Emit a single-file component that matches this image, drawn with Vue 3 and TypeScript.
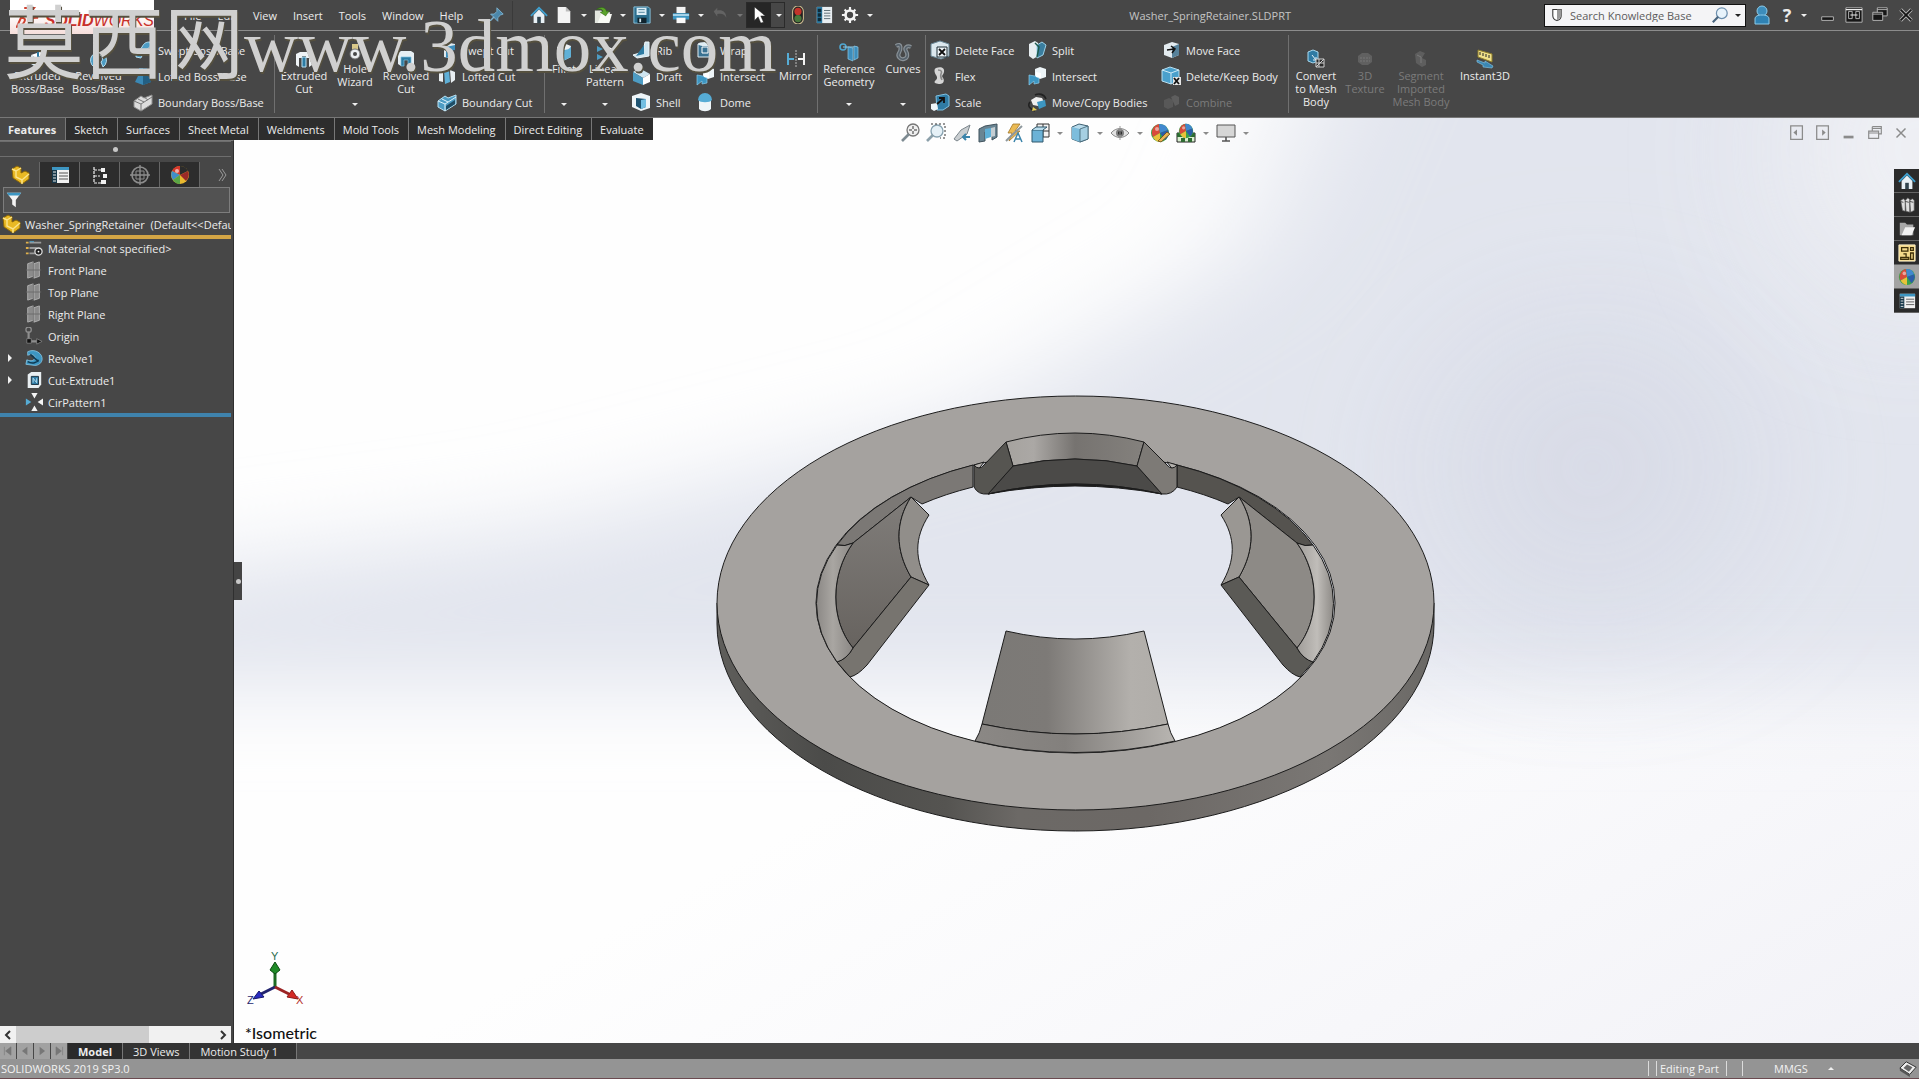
<script setup lang="ts">
interface Command {
  label: string
  icon: string
  menu?: boolean
  off?: boolean
}
interface Column {
  kind: 'big' | 'drop' | 'list'
  items: Command[]
}
interface Group {
  id: string
  columns: Column[]
}

const blue = '#4d9cc4'
const pale = '#b9e0f2'

const cubeBase = (front: string, side: string, top: string) =>
  `<path d="M3 6l9-3 5 2-9 4z" fill="${top}"/><path d="M3 6l5 3v9l-5-3z" fill="${front}"/><path d="M8 9l9-4v9l-9 4z" fill="${side}"/>`

const ball = `<circle cx="10" cy="10" r="9" fill="#e8b92f"/><path d="M10 10V1a9 9 0 0 1 8 5z" fill="#2b2b2b"/><path d="M10 10L2 6a9 9 0 0 1 8-5z" fill="#d6372c"/><path d="M10 10l8-4a9 9 0 0 1-2 10z" fill="#9a2a28"/><path d="M10 10L2 6a9 9 0 0 0 1 9z" fill="#3f8fc9"/><path d="M10 10l-7 5a9 9 0 0 0 7 4z" fill="#5aa646"/><circle cx="7" cy="6" r="2" fill="#fff" opacity=".6"/>`

const rgbBall = `<circle cx="10" cy="10" r="9" fill="#3aa24a"/><path d="M10 10L9 1a9 9 0 0 0-6 13z" fill="#d94a3a"/><path d="M10 10L9 1a9 9 0 0 1 9 6z" fill="#4188cf"/><path d="M10 10l8-3a9 9 0 0 1-3 10z" fill="#2c5da8"/><path d="M10 10l-7 4a9 9 0 0 0 7 5z" fill="#e8c23a"/><circle cx="7" cy="6" r="2" fill="#fff" opacity=".5"/>`

const part = `<path d="M2 4l5-3 4 2v5l4-2 4 2v6l-7 5-9-6z" fill="#e9b924" stroke="#8a6508"/><path d="M2 4l4 2 5-3M6 6v6l6 3 7-6M12 15v4" fill="none" stroke="#fbe48c" stroke-width="1.4"/>`

const plane = `<path d="M3 3l6-2v16l-6 2zM10 3l6-2v16l-6 2z" fill="#8b8b8b" stroke="#b5b5b5"/><path d="M1 10h17M9 0v20" stroke="#6a6a6a"/>`

const icons: Record<string, string> = {
  pin: `<path d="M11 2l7 7-3 1-3 3v4l-8-8h4l3-3z" fill="#4b87aa" stroke="#7fb3d0"/><path d="M8 12l-6 6" stroke="#7fb3d0" stroke-width="1.6"/>`,
  home: `<path d="M4 10v9h12v-9l-6-6z" fill="#e9f1f6"/><path d="M1 11l9-9 9 9" fill="none" stroke="#3fa0cf" stroke-width="2"/><path d="M8 19v-7h4v7z" fill="#32454f"/>`,
  page: `<path d="M3 1h9l5 5v13H3z" fill="#f4f4f4"/><path d="M12 1v5h5" fill="#bdbdbd"/>`,
  open: `<path d="M1 5h7l2 2h8l-2 12H1z" fill="#e3e6df"/><path d="M4 19l4-10h12l-3 10z" fill="#f8faf4"/><path d="M3 4c4-4 10-3 11 2l3-1-4 6-6-4 3-1c-1-3-4-3-7-2z" fill="#5aa329" stroke="#2f6912" stroke-width=".6"/>`,
  save: `<path d="M1 1h16l2 2v16H1z" fill="#2d6f8e" stroke="#8cc7e2"/><path d="M4 2h11v8H4z" fill="#dceef6"/><path d="M6 4h7M6 7h7" stroke="#4a7f99"/><path d="M5 13h10v6H5z" fill="#10242e"/><path d="M7 14h2v4H7z" fill="#d7e8ef"/>`,
  print: `<path d="M5 1h10v7H5z" fill="#f3f3f3"/><path d="M1 8h18v7H1z" fill="#3d96c2"/><path d="M1 10h18" stroke="#cdeaf7" stroke-width="1.6"/><path d="M5 13h10v6H5z" fill="#fafafa"/>`,
  undo: `<path d="M3 6l4-4v3c6-1 10 2 10 8-2-4-5-5-10-4v3z" fill="#636363"/>`,
  cursor: `<path d="M5 1v15l4-4 3 7 3-1-3-7h5z" fill="#fff" stroke="#222" stroke-width=".5"/>`,
  traffic: `<rect x="4" y="0" width="12" height="20" rx="6" fill="#222" stroke="#c9b98e" stroke-width="1.2"/><circle cx="10" cy="6" r="4" fill="#c3342b"/><circle cx="10" cy="14" r="4" fill="#49783c"/>`,
  options: `<path d="M2 1h17v18H2z" fill="#e8eef1"/><path d="M2 1h6v18H2z" fill="#2c7ba3"/><path d="M3 3h4v4H3zM3 8h4v4H3zM3 13h4v4H3z" fill="#0f2b39"/><path d="M10 5h7M10 8h7M10 11h7M10 14h7" stroke="#56666e"/>`,
  gear: `<circle cx="10" cy="10" r="5" fill="none" stroke="#f4f4f4" stroke-width="3"/><path d="M10 1v4M10 15v4M1 10h4M15 10h4M4 4l2 2M14 14l2 2M16 4l-2 2M6 14l-2 2" stroke="#f4f4f4" stroke-width="2.4"/>`,
  shield: `<path d="M4 2h12v9c0 4-3 6-6 7-3-1-6-3-6-7z" fill="#fff" stroke="#333" stroke-width="1.5"/><path d="M10 2v16l6-6V2z" fill="#999"/>`,
  lens: `<circle cx="12" cy="8" r="6" fill="#e8f3fb" stroke="#6d8fae" stroke-width="1.4"/><path d="M8 12l-6 6" stroke="#49657e" stroke-width="2.4"/>`,
  user: `<circle cx="10" cy="6" r="5" fill="#3d8dbb" stroke="#8ccbe9"/><path d="M3 19v-5c0-3 3-4 7-4s7 1 7 4v5z" fill="#2f82b3" stroke="#8ccbe9"/>`,
  min: `<path d="M3 12h13v4H3z" fill="#161616" stroke="#bcbcbc"/>`,
  tile: `<path d="M1 2h18v16H1z" fill="#161616" stroke="#bcbcbc"/><path d="M4 6h4v8H4zM12 6h4v8h-4z" fill="none" stroke="#bcbcbc"/><path d="M1 4h18M6 10h8" stroke="#eee" stroke-width="1.2"/>`,
  restore: `<path d="M7 2h11v9H7z" fill="#161616" stroke="#bcbcbc"/><path d="M7 4h11" stroke="#bcbcbc"/><path d="M2 7h11v9H2z" fill="#161616" stroke="#bcbcbc"/><path d="M2 9h11" stroke="#bcbcbc"/>`,
  close: `<path d="M4 4l12 12M16 4L4 16" stroke="#b5b5b5" stroke-width="4"/><path d="M4 4l12 12M16 4L4 16" stroke="#161616" stroke-width="2"/>`,
  paneL: `<path d="M3 2h13v15H3z" fill="none" stroke="#8b8b8b" stroke-width="1.4"/><path d="M10 6v7l-4-3.5z" fill="#8b8b8b"/>`,
  paneR: `<path d="M3 2h13v15H3z" fill="none" stroke="#8b8b8b" stroke-width="1.4"/><path d="M9 6v7l4-3.5z" fill="#8b8b8b"/>`,
  docMin: `<path d="M4 13h11v3H4z" fill="#8b8b8b"/>`,
  docRestore: `<path d="M7 3h10v8h-3M3 8h11v8H3zM3 10h11M7 5h10M7 3v5" fill="none" stroke="#8b8b8b" stroke-width="1.3"/>`,
  docClose: `<path d="M5 5l10 10M15 5L5 15" stroke="#8b8b8b" stroke-width="1.6"/>`,
  extrude: `${cubeBase('#dceef6', '#4d9cc4', '#fff')}<path d="M10 1v8" stroke="#2c7ba3" stroke-width="2"/>`,
  revolve: `<path d="M5 18a8 8 0 1 1 9 0l-2-5a4 4 0 1 0-5 0z" fill="${blue}" stroke="${pale}"/>`,
  sweep: `<path d="M3 17c0-9 4-6 6-10s4-5 8-5l1 5c-4 0-3 3-5 6s-5 2-5 5z" fill="${blue}" stroke="${pale}"/>`,
  loft: `<path d="M6 2h8v6l4 8-8 3-8-3 4-8z" fill="#3a88b5"/><path d="M10 2h4v6l4 8-8 3z" fill="#235f83"/>`,
  boundary: `<path d="M1 9l7-5 3 2 8-3v9l-11 7-7-4z" fill="#dcdcdc" stroke="#8f8f8f"/><path d="M1 9l7 3 11-7M8 12v7M5 7l6 3M11 5l4 3" stroke="#777" fill="none"/>`,
  exCut: `<path d="M2 5l4-2h8l4 2v11l-3 2v-9h-3V7H8v2H5v9l-3-2z" fill="#eef3f6"/><path d="M8 8h4v10H8z" fill="#2c7ba3" stroke="${pale}"/>`,
  hole: `<path d="M7 2h6v6H7z" fill="#d9c889"/><circle cx="10" cy="12" r="5" fill="#eceff1" stroke="#777"/><circle cx="10" cy="12" r="2" fill="#474747"/>`,
  revCut: `<path d="M2 4l3-2h10l3 2v11l-3 2V8H5v9l-3-2z" fill="#e6eff4"/><path d="M5 8h10v9h-3v-6H8v6H5z" fill="#2c7ba3" stroke="#7cc0e0" stroke-width=".7"/>`,
  swCut: `<path d="M2 5l6-3 10 2v5l-7 1v8l-4-1V9l-5-1z" fill="#dfeaf0"/><path d="M9 7l9-2v5l-5 1v6l-4 1z" fill="#3d8dbb"/>`,
  loCut: `<path d="M2 5l4-2v13l-4-1z" fill="#e9eff2"/><path d="M7 4l5-1 1 13-5 2z" fill="#5fb0d7"/><path d="M13 4l5 2v8l-4 3z" fill="#e9eff2"/>`,
  boCut: `<path d="M1 9l7-5 3 2 8-3v9l-11 7-7-4z" fill="${blue}" stroke="${pale}"/><path d="M1 9l7 3 11-7M8 12v7M5 7l6 3" stroke="#dff2fb" fill="none"/><path d="M9 14l9-6v4l-9 6z" fill="#1e4d66"/>`,
  fillet: `<path d="M3 5l9-3 5 2v11l-8 4-6-3z" fill="#eef1f2"/><path d="M9 8c4 0 7-1 8-4v11l-8 4z" fill="#5fb0d7"/>`,
  pattern: `<path d="M2 4l6 3-6 3zM2 12l6 3-6 3z" fill="${blue}"/><path d="M12 4l6 3-6 3zM12 12l6 3-6 3z" fill="#fff"/>`,
  rib: `<path d="M14 2h4v14l-12 2-4-3 10-3z" fill="#cfe6f1" stroke="#eef7fb"/><path d="M13 5v9l-8 2z" fill="#2c7ba3"/>`,
  draft: `<path d="M2 6l6-4 11 6-7 4z" fill="#cfe6f1"/><path d="M2 6l10 6v7L2 15z" fill="#4d9cc4"/><path d="M12 12l7-4v8l-7 3z" fill="#fff"/>`,
  shell: `<path d="M1 4l9-3 9 3v12l-9 3-9-4z" fill="#eef5f8"/><path d="M5 6l10 1v8l-5 2-5-3z" fill="#1e5472"/><path d="M10 8l5-1v8l-5 2z" fill="#73bfe2"/>`,
  wrap: `<path d="M3 4h14v13H3z" fill="#3a7292" stroke="#e0edf3"/><ellipse cx="10" cy="4" rx="7" ry="2" fill="#e0edf3"/><path d="M7 7h6v6H7z" fill="none" stroke="#fff"/>`,
  intersect: `<path d="M8 3l5-2 6 2v8l-6 2-5-2z" fill="#eef5f8"/><path d="M2 9l6 1 4 2v5l-5 1v-3l-5 4z" fill="#3d96c2" stroke="#8ccbe9" stroke-width=".7"/><path d="M9 6l5 1v5l-5-1z" fill="#fff"/>`,
  dome: `<path d="M4 9h12v8c-3 3-9 3-12 0z" fill="#eef5f8"/><path d="M3 8a7 7 0 0 1 14 0c-2 3-12 3-14 0z" fill="#56acd5"/>`,
  mirror: `<path d="M1 4v12h2v-5h5V9H3V4z" fill="#56acd5"/><path d="M19 4v12h-2v-5h-5V9h5V4z" fill="#f4f4f4"/><path d="M10 1v18" stroke="#bbb" stroke-dasharray="2 1"/>`,
  refgeo: `<circle cx="4" cy="5" r="3" fill="none" stroke="#4fa6d0" stroke-width="1.6"/><path d="M4 5h14" stroke="#8ccbe9"/><path d="M9 5l5 1v13l-5-2zM15 4l4 1v11l-4 2z" fill="#3d8dbb" stroke="#8ccbe9" stroke-width=".7"/>`,
  curves: `<path d="M3 4c6-4 5 4 3 7s1 7 5 6 4-5 2-8 1-6 5-4" fill="none" stroke="#8a9298" stroke-width="4"/><path d="M3 4c6-4 5 4 3 7s1 7 5 6 4-5 2-8 1-6 5-4" fill="none" stroke="#56616a" stroke-width="1.6"/>`,
  delFace: `<path d="M1 4l9-3 9 3v12l-8 3-10-3z" fill="#dce8ee" stroke="#6a8796"/><path d="M7 7h10v10H7z" fill="#eef5f8" stroke="#1d2c34"/><path d="M9 9l6 6M15 9l-6 6" stroke="#111" stroke-width="1.8"/>`,
  flex: `<path d="M6 2c5-2 9 0 8 4s-3 3-1 6 0 6-3 6-7-1-5-3 3-3 1-6-2-6 0-7z" fill="#d5d5d5"/><path d="M8 4c4 0 4 2 3 4s0 4 1 6" stroke="#8a8a8a" stroke-width="1.6" fill="none"/>`,
  scale: `<path d="M6 4l10-2 3 2v10l-6 4H7z" fill="#2f7ba4" stroke="#7fc0e0"/><path d="M1 12l6-1 1 6-4 2-3-2z" fill="#eef5f8"/><path d="M7 12l6-5M9 6h5v5" stroke="#111" stroke-width="1.8" fill="none"/>`,
  split: `<path d="M2 4l6-3 3 2v13l-5 3-4-3z" fill="#e8eef1"/><path d="M10 5l5-3 4 3-3 10-6 3z" fill="#3a7e9f" stroke="#9fd2e8"/><path d="M8 3l4 4-2 10" stroke="#1d5a4b" stroke-width="1.4" fill="none"/>`,
  moveCopy: `<path d="M4 8l5-3 6 1 2 4-6 4-5-1z" fill="#f0f0f0"/><path d="M10 10l8-2 1 6-7 3z" fill="#3d96c2"/><path d="M8 3c4-2 9-1 11 4M3 10c-3 4 0 7 5 9" fill="none" stroke="#222" stroke-width="1.6"/><path d="M6 15l4 3-5 1z" fill="#e7cf5a"/>`,
  moveFace: `<path d="M3 5l8-3 7 2v11l-7 3-8-3z" fill="#e3ebef"/><path d="M11 7l7-3v11l-7 3z" fill="#57829b"/><path d="M6 10l7-1M10 6l4 3-3 4" stroke="#111" stroke-width="1.5" fill="none"/>`,
  keepBody: `<path d="M1 4l8-3 9 3v10l-8 4-9-3z" fill="#4aa0cc" stroke="#b9e0f2"/><path d="M1 4l9 3 8-3M10 7v11" stroke="#cfeaf6" fill="none"/><path d="M12 11h8v8h-8z" fill="#e6e6e6"/><path d="M13 12l5 6M18 12l-5 6" stroke="#111" stroke-width="1.8"/>`,
  combine: `<path d="M3 8l5-2 4 2v7l-5 2-4-2z" fill="#585858"/><path d="M10 5l4-2 4 2v7l-4 2z" fill="#5e5e5e"/>`,
  convert: `<path d="M2 3l5-2 5 2v9l-5 2-5-2z" fill="#2f7ba4" stroke="#a9daf0"/><path d="M6 6l4 5M10 8v3H7" stroke="#e9f6fc" fill="none"/><path d="M10 10h8v8h-8z" fill="#2a2a2a" stroke="#cfcfcf"/><path d="M10 18l8-8M13 10v8M10 14h8" stroke="#cfcfcf"/>`,
  texture: `<path d="M3 7l4-3h6l4 3v6l-4 3H7l-4-3z" fill="#606060"/><path d="M5 9h10M5 12h10" stroke="#777" stroke-dasharray="2 1"/>`,
  segment: `<path d="M4 5l5-3 5 2-3 5 4 2v5l-4 2-6-4z" fill="#5e5e5e"/><path d="M6 6l4 2v6" stroke="#7a7a7a" fill="none"/>`,
  instant: `<path d="M3 1l14 4v8L3 8z" fill="#eedf8a" stroke="#8f7f2b"/><path d="M5 3v3M8 4v3M11 5v3M14 6v3" stroke="#222"/><path d="M2 11l8 3v-2l8 5-1 2-9-1v-2l-6-3z" fill="#3b87b3" stroke="#8ccbe9" stroke-width=".6"/>`,
  zoomFit: `<circle cx="13" cy="7" r="6" fill="#f0f0f0" stroke="#777" stroke-width="1.3"/><path d="M13 3v8M9 7h8" stroke="#333" stroke-dasharray="3 2"/><path d="M9 11l-7 7" stroke="#7e8b92" stroke-width="2.6"/>`,
  zoomArea: `<circle cx="11" cy="8" r="6" fill="#e6f1f7" stroke="#87a2b0" stroke-width="1.3"/><path d="M5 1h14v14h-5" fill="none" stroke="#333" stroke-dasharray="2 2"/><path d="M7 12l-6 6" stroke="#8ca0aa" stroke-width="2.6"/>`,
  prevView: `<path d="M18 2l-9 5-7 9 3 2 10-7z" fill="#c9ced1" stroke="#7c868c"/><path d="M11 14h7M14 11l-3 3 3 3" stroke="#3a84ab" stroke-width="2" fill="none"/>`,
  section: `<path d="M1 6l6-3 12-2v13l-5 3V9H7v9l-6 1z" fill="#6a8593" stroke="#40525c"/><path d="M7 6l6-1v9l-6 2z" fill="#5fb0d7"/><path d="M13 5l4-1v9l-4 1z" fill="#c5ced3"/>`,
  dynView: `<path d="M9 1h7l-5 7h5L5 18l3-8H4z" fill="#eaba54" stroke="#a2762a" stroke-width=".8"/><path d="M18 3L6 14l-4 4" stroke="#8e989d" stroke-width="2"/><path d="M10 19l4-9 4 9M12 16h5" stroke="#3a84ab" stroke-width="1.5" fill="none"/>`,
  orient: `<path d="M7 1h12v13H7z" fill="#f4f4f4" stroke="#333"/><path d="M13 1v13M7 8h12" stroke="#333"/><path d="M2 7h11v12H2z" fill="#6cb2d6" stroke="#31586c"/><path d="M2 7l4-3h11l-4 3" fill="#b9dcec" stroke="#31586c"/>`,
  display: `<path d="M2 4l7-3 9 2v13l-8 3-8-3z" fill="#b9dcec" stroke="#3e5f70"/><path d="M2 4l8 2v13l-8-3z" fill="#7dbddc"/><path d="M10 6l8-3v13l-8 3z" fill="#a6cfe2" stroke="#3e5f70" stroke-width=".8"/>`,
  eye: `<path d="M1 10c5-6 13-6 18 0-5 6-13 6-18 0z" fill="#e2e2e2" stroke="#8a8a8a"/><circle cx="10" cy="10" r="4" fill="#7e7e7e"/><circle cx="10" cy="10" r="2" fill="#222"/><path d="M10 3v14" stroke="#999"/>`,
  appear: `${rgbBall}<path d="M8 18l9-9 3 2-9 8z" fill="#e9b553" stroke="#6b4a16" stroke-width=".8"/>`,
  scene: `<path d="M1 10h18v9H1z" fill="#d9efd0" stroke="#222"/><path d="M1 10h5v4H1zM14 10h5v4h-5zM5 15h4v4H5zM12 15h4v4h-4z" fill="#2e6a32"/><g transform="translate(2 0) scale(.8)">${rgbBall}</g>`,
  monitor: `<path d="M1 2h18v12H1z" fill="#d6d6d6" stroke="#555"/><path d="M10 14v4M6 18h8" stroke="#555" stroke-width="1.6"/>`,
  part,
  props: `<path d="M2 2h17v16H2z" fill="#f1f1f1"/><path d="M2 2h17v3H2z" fill="#3d96c2"/><path d="M2 5h5v13H2z" fill="#17384a"/><path d="M3 7h3M3 10h3M3 13h3M3 16h3" stroke="#e8e8e8"/><path d="M9 8h9M9 11h9M9 14h9" stroke="#555"/>`,
  config: `<path d="M4 2v16h8M4 5h8M4 11h6" fill="none" stroke="#f1f1f1" stroke-width="1.2" stroke-dasharray="3 1"/><path d="M11 3h4v4h-4zM13 9h4v4h-4zM11 15h5v4h-5z" fill="#f1f1f1"/>`,
  target: `<circle cx="10" cy="10" r="8" fill="none" stroke="#8d8d8d" stroke-width="1.6"/><path d="M10 0v20M0 10h20" stroke="#8d8d8d" stroke-width="1.4"/><path d="M6 6h8v8H6z" fill="none" stroke="#8d8d8d"/>`,
  ball,
  funnel: `<path d="M2 2h16l-6 8v8l-4-3v-5z" fill="#f4f4f4"/><path d="M2 2h16l-2 3H4z" fill="#3d96c2"/>`,
  material: `<path d="M1 4h3M1 10h3M1 16h3" stroke="#e0b14d" stroke-width="2"/><path d="M5 4h13M5 10h8M5 16h6" stroke="#9a9a9a" stroke-width="2"/><path d="M5 3h5" stroke="#4fa6d0"/><circle cx="15" cy="14" r="4" fill="#222" stroke="#ddd" stroke-width="1.4"/><circle cx="15" cy="14" r="1" fill="#fff"/>`,
  plane,
  origin: `<circle cx="4" cy="3" r="3" fill="none" stroke="#8e8e8e" stroke-width="1.4"/><path d="M4 5v11h10" stroke="#8e8e8e" stroke-width="2.4" fill="none"/><path d="M2 13h5v5H2zM13 13l6 3-6 3z" fill="#111" stroke="#8e8e8e" stroke-width=".8"/>`,
  revFeat: `<path d="M3 3c8-4 17 2 16 9-1 5-6 7-10 6l-8-1 1-5c5 2 8 1 9-2s-4-5-8-3z" fill="#3d96c2" stroke="#8fd0ee" stroke-width=".8"/><path d="M6 6l9 8M3 14c5 3 11 1 12-2" stroke="#0f3a52" stroke-width="1.6" fill="none"/>`,
  cutFeat: `<path d="M3 4l4-3h11v14l-3 4H3z" fill="#e8eef1"/><path d="M7 6h8v9H7z" fill="#2f7ba4" stroke="#162e3b"/><path d="M9 13V8l4 5V8" stroke="#bfe4f5" fill="none"/>`,
  cirFeat: `<path d="M7 0h7l-3.500 6zM20 6v8l-6-4zM7 20h7l-3.500-6z" fill="#f4f4f4"/><path d="M1 6v8l6-4z" fill="#56acd5"/>`,
  books: `<path d="M3 5l3-2 2 2v12l-3-1zM8 5l3-3 2 2v14l-4-1zM13 5l3-2 2 2v11l-4 2z" fill="#dedede" stroke="#555" stroke-width=".7"/><path d="M2 6l4 1M8 6l4 1M13 6l4 1" stroke="#444"/>`,
  folder: `<path d="M2 3h6l2 2h7v12H2z" fill="#a8a8a8"/><path d="M4 17l4-9h11l-4 9z" fill="#f1f1f1"/>`,
  palette: `<path d="M1 1h18v18H1z" fill="#f3d98a" stroke="#fff4cf"/><path d="M4 4h7v4H4zM14 4h3v3h-3zM3 15h9v2H3zM6 11h3v4M14 10h3v7h-3z" fill="none" stroke="#3b2d08" stroke-width="1.4"/>`,
  rgbBall,
  note: `<path d="M1 9l7-7 11 6-7 8z" fill="#efefef" stroke="#222"/><path d="M5 9l4-4 6 3-4 5z" fill="#666"/><path d="M1 9l11 7v3L1 12z" fill="#555"/>`,
  first: `<path d="M4 3v14M15 3v14l-9-7z" stroke="#777" fill="#777"/>`,
  prev: `<path d="M14 3v14l-9-7z" fill="#777"/>`,
  next: `<path d="M6 3v14l9-7z" fill="#777"/>`,
  last: `<path d="M16 3v14M5 3v14l9-7z" stroke="#777" fill="#777"/>`,
}

const menus = ['File', 'Edit', 'View', 'Insert', 'Tools', 'Window', 'Help']

const quick: { icon: string; name: string; menu: boolean }[] = [
  { icon: 'home', name: 'Home', menu: false },
  { icon: 'page', name: 'New', menu: true },
  { icon: 'open', name: 'Open', menu: true },
  { icon: 'save', name: 'Save', menu: true },
  { icon: 'print', name: 'Print', menu: true },
  { icon: 'undo', name: 'Undo', menu: true },
  { icon: 'cursor', name: 'Select', menu: true },
  { icon: 'traffic', name: 'Rebuild', menu: false },
  { icon: 'options', name: 'File properties', menu: false },
  { icon: 'gear', name: 'Options', menu: true },
]

const big = (label: string, icon: string, off = false): Column => ({ kind: 'big', items: [{ label, icon, off }] })
const drop = (label: string, icon: string): Column => ({ kind: 'drop', items: [{ label, icon, menu: true }] })
const list = (...rows: [string, string, boolean?][]): Column => ({
  kind: 'list',
  items: rows.map(([label, icon, off]) => ({ label, icon, off })),
})

const groups: Group[] = [
  {
    id: 'boss',
    columns: [
      big('Extruded\nBoss/Base', 'extrude'),
      big('Revolved\nBoss/Base', 'revolve'),
      list(['Swept Boss/Base', 'sweep'], ['Lofted Boss/Base', 'loft'], ['Boundary Boss/Base', 'boundary']),
    ],
  },
  {
    id: 'cut',
    columns: [
      big('Extruded\nCut', 'exCut'),
      drop('Hole\nWizard', 'hole'),
      big('Revolved\nCut', 'revCut'),
      list(['Swept Cut', 'swCut'], ['Lofted Cut', 'loCut'], ['Boundary Cut', 'boCut']),
    ],
  },
  {
    id: 'modify',
    columns: [
      drop('Fillet', 'fillet'),
      drop('Linear\nPattern', 'pattern'),
      list(['Rib', 'rib'], ['Draft', 'draft'], ['Shell', 'shell']),
      list(['Wrap', 'wrap'], ['Intersect', 'intersect'], ['Dome', 'dome']),
      big('Mirror', 'mirror'),
    ],
  },
  { id: 'geometry', columns: [drop('Reference\nGeometry', 'refgeo'), drop('Curves', 'curves')] },
  {
    id: 'bodies',
    columns: [
      list(['Delete Face', 'delFace'], ['Flex', 'flex'], ['Scale', 'scale']),
      list(['Split', 'split'], ['Intersect', 'intersect'], ['Move/Copy Bodies', 'moveCopy']),
      list(['Move Face', 'moveFace'], ['Delete/Keep Body', 'keepBody'], ['Combine', 'combine', true]),
    ],
  },
  {
    id: 'mesh',
    columns: [
      big('Convert\nto Mesh\nBody', 'convert'),
      big('3D\nTexture', 'texture', true),
      big('Segment\nImported\nMesh Body', 'segment', true),
      big('Instant3D', 'instant'),
    ],
  },
]

const tabs = ['Features', 'Sketch', 'Surfaces', 'Sheet Metal', 'Weldments', 'Mold Tools', 'Mesh Modeling', 'Direct Editing', 'Evaluate']

const managerTabs = [
  { icon: 'part', name: 'Feature tree' },
  { icon: 'props', name: 'Properties' },
  { icon: 'config', name: 'Configurations' },
  { icon: 'target', name: 'Dimensions' },
  { icon: 'ball', name: 'Display' },
]

const features = [
  { icon: 'material', name: 'Material <not specified>', open: false },
  { icon: 'plane', name: 'Front Plane', open: false },
  { icon: 'plane', name: 'Top Plane', open: false },
  { icon: 'plane', name: 'Right Plane', open: false },
  { icon: 'origin', name: 'Origin', open: false },
  { icon: 'revFeat', name: 'Revolve1', open: true },
  { icon: 'cutFeat', name: 'Cut-Extrude1', open: true },
  { icon: 'cirFeat', name: 'CirPattern1', open: false },
]

const viewTools: { icon: string; name: string; menu: boolean }[] = [
  { icon: 'zoomFit', name: 'Zoom to fit', menu: false },
  { icon: 'zoomArea', name: 'Zoom to area', menu: false },
  { icon: 'prevView', name: 'Previous view', menu: false },
  { icon: 'section', name: 'Section view', menu: false },
  { icon: 'dynView', name: 'Annotation views', menu: false },
  { icon: 'orient', name: 'View orientation', menu: true },
  { icon: 'display', name: 'Display style', menu: true },
  { icon: 'eye', name: 'Hide or show items', menu: true },
  { icon: 'appear', name: 'Edit appearance', menu: false },
  { icon: 'scene', name: 'Apply scene', menu: true },
  { icon: 'monitor', name: 'View settings', menu: true },
]

const docControls = ['paneL', 'paneR', 'docMin', 'docRestore', 'docClose']
const taskPane = ['home', 'books', 'folder', 'palette', 'rgbBall', 'props']

/* One side flap of the washer; the opposite flap is its mirror image. */
const flap = [
  { d: 'M837 545A259 150 0 0 1 973 465V487Q945 494 922 504L911 497L853 543Q845 547 837 545Z', left: '#7b7875', right: '#55534f' },
  { d: 'M853 543L911 497C895 522 895 550 911 577L853 648C830 620 830 575 853 543Z', left: 'url(#flapL)', right: '#8d8a86' },
  { d: 'M911 497L929 515C914 538 914 560 929 585L911 577C895 550 895 522 911 497Z', left: '#918e8a', right: '#9a9793' },
  { d: 'M911 577L929 585L867 665Q858 675 850 677L837 662Q847 659 853 648Z', left: '#77746f', right: '#5b5a56' },
  { d: 'M837 545Q845 547 853 543C830 575 830 620 853 648Q847 659 837 662A259 150 0 0 1 837 545Z', left: 'url(#filletL)', right: 'url(#filletR)' },
]
</script>

<template>
  <div class="app">
    <header class="title-bar">
      <div class="logo">
        <svg class="mark" viewBox="0 0 30 26" aria-hidden="true">
          <path d="M10 2h12l-5 7q4 0 1 4l-3 4" fill="none" stroke="#d0402f" stroke-width="2.400" />
          <path d="M1 25l5-11q7 0 4 5t-9 6zM27 14q-8-1-7 3t-6 7" fill="none" stroke="#d0402f" stroke-width="2.400" />
        </svg>
        <span class="brand"><b>SOLID</b>WORKS</span>
      </div>
      <nav class="menus">
        <button v-for="m in menus" :key="m" type="button">{{ m }}</button>
      </nav>
      <button class="pin" type="button" aria-label="Pin menu"><svg class="ico s18" viewBox="0 0 20 20" v-html="icons.pin" /></button>
      <div class="quick">
        <button v-for="q in quick" :key="q.icon" type="button" :aria-label="q.name" :class="[q.icon, { menu: q.menu }]">
          <svg class="ico s18" viewBox="0 0 20 20" v-html="icons[q.icon]" />
          <i v-if="q.menu" class="caret" />
        </button>
      </div>
      <h1>Washer_SpringRetainer.SLDPRT</h1>
      <label class="search">
        <svg class="ico s14" viewBox="0 0 20 20" v-html="icons.shield" />
        <input type="text" placeholder="Search Knowledge Base" aria-label="Search Knowledge Base">
        <svg class="ico s18" viewBox="0 0 20 20" v-html="icons.lens" />
        <i class="caret dark" />
      </label>
      <div class="window-controls">
        <button type="button" aria-label="Account"><svg class="ico s20" viewBox="0 0 20 20" v-html="icons.user" /></button>
        <button class="help" type="button">?<i class="caret" /></button>
        <button v-for="w in ['min', 'tile', 'restore', 'close']" :key="w" type="button" :aria-label="w">
          <svg class="ico s18" viewBox="0 0 20 20" v-html="icons[w]" />
        </button>
      </div>
    </header>

    <section class="ribbon">
      <div v-for="g in groups" :key="g.id" class="group" :class="g.id">
        <div v-for="(c, i) in g.columns" :key="i" class="column" :class="c.kind">
          <button v-for="item in c.items" :key="item.label" type="button" :disabled="item.off">
            <svg class="ico s20" viewBox="0 0 20 20" v-html="icons[item.icon]" />
            <span>{{ item.label }}</span>
            <i v-if="item.menu" class="caret" />
          </button>
        </div>
      </div>
    </section>

    <main class="workspace">
      <nav class="tabs">
        <button v-for="(t, i) in tabs" :key="t" type="button" :class="{ active: i === 0 }">{{ t }}</button>
      </nav>

      <aside class="manager">
        <div class="grip"><i /></div>
        <div class="manager-tabs">
          <button v-for="(t, i) in managerTabs" :key="t.name" type="button" :aria-label="t.name" :class="{ active: i === 0 }">
            <svg class="ico s20" viewBox="0 0 20 20" v-html="icons[t.icon]" />
          </button>
          <button class="more" type="button" aria-label="More tabs">
            <svg viewBox="0 0 10 14"><path d="M1 1l4 6-4 6M4 1l4 6-4 6" fill="none" stroke="#9a9a9a" /></svg>
          </button>
        </div>
        <label class="filter">
          <svg class="ico s18" viewBox="0 0 20 20" v-html="icons.funnel" />
          <input type="text" aria-label="Filter">
        </label>
        <div class="root">
          <svg class="ico s20" viewBox="0 0 20 20" v-html="icons.part" />
          <span>Washer_SpringRetainer&nbsp; (Default&lt;&lt;Default&gt;_Display State 1&gt;)</span>
        </div>
        <ul class="features">
          <li v-for="f in features" :key="f.name">
            <i :class="{ expand: f.open }" />
            <svg class="ico s18" viewBox="0 0 20 20" v-html="icons[f.icon]" />
            <span>{{ f.name }}</span>
          </li>
        </ul>
        <div class="scroll">
          <button type="button" aria-label="Scroll left"><svg viewBox="0 0 8 10"><path d="M6 1L2 5l4 4" fill="none" stroke="#333" stroke-width="2" /></svg></button>
          <div class="track"><i /></div>
          <button type="button" aria-label="Scroll right"><svg viewBox="0 0 8 10"><path d="M2 1l4 4-4 4" fill="none" stroke="#333" stroke-width="2" /></svg></button>
        </div>
      </aside>

      <section class="viewport">
        <svg class="backdrop" viewBox="0 0 1600 900" preserveAspectRatio="none" aria-hidden="true">
          <defs>
            <filter id="wide" x="-30%" y="-30%" width="160%" height="160%"><feGaussianBlur stdDeviation="60 42" /></filter>
            <filter id="deep" x="-150%" y="-150%" width="400%" height="400%"><feGaussianBlur stdDeviation="80 70" /></filter>
            <linearGradient id="floor" x1="0" y1="0" x2="1" y2="1">
              <stop offset=".55" stop-color="#f3f3f8" stop-opacity="0" />
              <stop offset="1" stop-color="#f2f2f7" />
            </linearGradient>
          </defs>
          <rect width="1600" height="900" fill="#fefefe" />
          <rect width="1600" height="900" fill="url(#floor)" />
          <path d="M-200 460L300 395L700 290L960 130L1060 -120H1800V555H-200Z" fill="#e2e5ee" filter="url(#wide)" />
          <ellipse cx="1290" cy="340" rx="150" ry="150" fill="#d7dae6" opacity=".9" filter="url(#deep)" />
          <ellipse cx="1600" cy="30" rx="110" ry="150" fill="#f6f6f8" opacity=".8" filter="url(#deep)" />
        </svg>

        <svg class="model" viewBox="234 118 1685 925" aria-label="Washer_SpringRetainer model">
          <defs>
            <linearGradient id="rim">
              <stop offset="0" stop-color="#5f5e5b" />
              <stop offset=".15" stop-color="#4b4b49" />
              <stop offset=".32" stop-color="#555451" />
              <stop offset=".42" stop-color="#6c6966" />
              <stop offset=".6" stop-color="#6c6865" />
              <stop offset=".85" stop-color="#7a7774" />
              <stop offset="1" stop-color="#6a6865" />
            </linearGradient>
            <linearGradient id="tongue">
              <stop offset="0" stop-color="#7b7976" />
              <stop offset=".35" stop-color="#7d7a77" />
              <stop offset=".8" stop-color="#b3b0ac" />
              <stop offset="1" stop-color="#b0ada9" />
            </linearGradient>
            <linearGradient id="root">
              <stop offset="0" stop-color="#8b8885" />
              <stop offset=".45" stop-color="#83807d" />
              <stop offset="1" stop-color="#b8b5b1" />
            </linearGradient>
            <linearGradient id="crest">
              <stop offset="0" stop-color="#a6a39f" />
              <stop offset=".2" stop-color="#aba8a5" />
              <stop offset=".5" stop-color="#767370" />
              <stop offset="1" stop-color="#84817d" />
            </linearGradient>
            <linearGradient id="flapL" x1="0" y1="0" x2="0" y2="1">
              <stop offset="0" stop-color="#807d7a" />
              <stop offset="1" stop-color="#67635f" />
            </linearGradient>
            <linearGradient id="filletL">
              <stop offset="0" stop-color="#8b8885" />
              <stop offset=".45" stop-color="#a9a6a2" />
              <stop offset="1" stop-color="#8a8784" />
            </linearGradient>
            <linearGradient id="filletR">
              <stop offset="0" stop-color="#8d8a86" />
              <stop offset=".45" stop-color="#c0bdb9" />
              <stop offset="1" stop-color="#a09d99" />
            </linearGradient>
            <mask id="opening">
              <rect x="234" y="118" width="1685" height="925" fill="#fff" />
              <ellipse cx="1075.500" cy="603" rx="259.500" ry="150" fill="#000" />
            </mask>
          </defs>
          <g stroke="#1c1c1c" stroke-linejoin="round">
            <path d="M717 603V624A358.500 207 0 0 0 1434 624V603Z" fill="url(#rim)" mask="url(#opening)" />
            <ellipse cx="1075.500" cy="603" rx="358.500" ry="207" fill="#a5a29f" mask="url(#opening)" />
            <ellipse cx="1075.500" cy="603" rx="259.500" ry="150" fill="none" />
            <g><path v-for="(p, i) in flap" :key="i" :d="p.d" :fill="p.left" /></g>
            <g transform="translate(2150 0) scale(-1 1)"><path v-for="(p, i) in flap" :key="i" :d="p.d" :fill="p.right" /></g>
            <path d="M974 465L984 462L978 470ZM1177 465L1167 462L1173 470Z" fill="#b3b0ac" />
            <path d="M1006 442Q1075 424 1144 442L1137 466Q1075 452 1013 466Z" fill="url(#crest)" />
            <path d="M1013 466Q1075 452 1137 466L1162 494Q1075 474 988 494Z" fill="#4b4a48" />
            <path d="M988 494Q1075 474 1162 494Q1075 478 988 494Z" fill="#1c1c1c" />
            <path d="M1006 442L984 465Q979 471 974 465V487Q978 495 988 494L1013 466Z" fill="#565551" />
            <path d="M1144 442L1167 465Q1172 471 1177 465V487Q1172 495 1162 494L1137 466Z" fill="#7d7a76" />
            <path d="M1006 631Q1075 647 1144 631L1168 724Q1075 744 982 724Z" fill="url(#tongue)" />
            <path d="M982 724Q1075 744 1168 724Q1170 733 1175 741A260 150 0 0 1 975 741Q980 733 982 724Z" fill="url(#root)" />
          </g>
        </svg>

        <div class="view-bar">
          <div class="view-tools">
            <template v-for="t in viewTools" :key="t.icon">
              <button type="button" :aria-label="t.name"><svg class="ico s20" viewBox="0 0 20 20" v-html="icons[t.icon]" /></button>
              <button v-if="t.menu" class="arrow" type="button" :aria-label="t.name + ' menu'"><i class="caret grey" /></button>
            </template>
          </div>
          <div class="doc-controls">
            <button v-for="d in docControls" :key="d" type="button" :aria-label="d"><svg class="ico s18" viewBox="0 0 20 20" v-html="icons[d]" /></button>
          </div>
        </div>

        <button class="handle" type="button" aria-label="Collapse panel"><i /></button>

        <nav class="task-pane">
          <button v-for="t in taskPane" :key="t" type="button" :aria-label="t" :class="{ active: t === 'rgbBall' }">
            <svg class="ico s18" viewBox="0 0 20 20" v-html="icons[t]" />
          </button>
        </nav>

        <div class="orientation">
          <svg viewBox="0 0 60 56" aria-hidden="true">
            <path d="M30 37V18" stroke="#1d6a22" stroke-width="3" />
            <path d="M30 11l5 8-5 4-5-4z" fill="#1f8a27" stroke="#0c4a11" />
            <path d="M30 36L16 43" stroke="#22246e" stroke-width="3" />
            <path d="M8 48l6-8 5 6z" fill="#2a2cc0" stroke="#15166a" />
            <path d="M30 36L44 43" stroke="#9b2323" stroke-width="3" />
            <path d="M53 48l-6-9-5 7z" fill="#d42a26" stroke="#8b1816" />
            <text x="26" y="9" fill="#2a6b4c">Y</text>
            <text x="2" y="53" fill="#26286e">Z</text>
            <text x="51" y="53" fill="#b5312c">X</text>
          </svg>
          <p>*Isometric</p>
        </div>
      </section>
    </main>

    <nav class="doc-tabs">
      <button v-for="n in ['first', 'prev', 'next', 'last']" :key="n" class="step" type="button" :aria-label="n">
        <svg viewBox="0 0 20 20" v-html="icons[n]" />
      </button>
      <button class="doc active" type="button">Model</button>
      <button class="doc" type="button">3D Views</button>
      <button class="doc" type="button">Motion Study 1</button>
    </nav>

    <footer class="status">
      <span class="version">SOLIDWORKS 2019 SP3.0</span>
      <i class="rule" />
      <span class="cell">Editing Part</span>
      <span class="cell units">MMGS <i class="caret up" /></span>
      <svg class="ico s18" viewBox="0 0 20 20" v-html="icons.note" />
    </footer>

    <p class="watermark" aria-hidden="true"><span>莫西网</span>www.3dmox.com</p>
  </div>
</template>

<style>
body {
  margin: 0;
  background: #474747;
}
</style>

<style scoped>
.app {
  position: relative;
  display: flex;
  flex-direction: column;
  min-height: 100vh;
  overflow: hidden;
  background: #474747;
  color: #ececec;
  font: 11px/13px "Open Sans", "Noto Sans", sans-serif;
}
button {
  display: flex;
  align-items: center;
  justify-content: center;
  margin: 0;
  padding: 0;
  border: 0;
  background: none;
  color: inherit;
  font: inherit;
  white-space: nowrap;
}
input {
  min-width: 0;
  flex: 1;
  padding: 0;
  border: 0;
  outline: 0;
  background: none;
  color: inherit;
  font: inherit;
}
.ico {
  display: block;
  flex: none;
}
.s14 { width: 14px; height: 14px; }
.s18 { width: 18px; height: 18px; }
.s20 { width: 20px; height: 20px; }
.caret {
  flex: none;
  width: 0;
  height: 0;
  border: 3px solid transparent;
  border-bottom: 0;
  border-top-color: #f0f0f0;
}
.caret.dark { border-top-color: #222; }
.caret.grey { border-top-color: #8b8b8b; }
.caret.up {
  border: 3px solid transparent;
  border-top: 0;
  border-bottom-color: #f0f0f0;
}

.title-bar {
  display: flex;
  align-items: center;
  box-sizing: border-box;
  height: 31px;
  border-bottom: 1px solid #8c8c8c;
}
.logo {
  z-index: 1;
  display: flex;
  align-items: center;
  align-self: flex-start;
  width: 144px;
  height: 34px;
  margin-left: 10px;
  flex: none;
  background: linear-gradient(#fff 40%, #f6dedb);
  color: #c9302a;
}
.mark {
  width: 30px;
  height: 26px;
  margin: 0 4px 0 6px;
}
.brand {
  padding-top: 8px;
  font: italic 16px/18px "Liberation Sans", Arial, sans-serif;
}
.menus {
  display: flex;
  gap: 16px;
  margin-left: 30px;
}
.pin {
  width: 50px;
  height: 29px;
  padding-left: 16px;
  border-right: 1px solid #3a3a3a;
}
.quick {
  display: flex;
  align-items: center;
  margin-left: 14px;
}
.quick button {
  width: 26px;
  height: 26px;
}
.quick button.menu {
  width: 39px;
  gap: 8px;
}
.quick .home { width: 24px; }
.quick .undo .caret { border-top-color: #777; }
.quick .cursor {
  box-sizing: border-box;
  border: 1px solid #2a2a2a;
  background: linear-gradient(90deg, #262626 24px, #474747 24px);
}
h1 {
  flex: 1;
  margin: 0;
  color: #c4c4c4;
  font: inherit;
  text-align: center;
}
.search {
  display: flex;
  align-items: center;
  gap: 6px;
  box-sizing: border-box;
  width: 202px;
  height: 23px;
  padding: 0 4px 0 5px;
  border: 1px solid #111;
  background: #f4f4f6;
  color: #555;
}
.search input::placeholder {
  color: #5c5c5c;
  opacity: 1;
}
.window-controls {
  display: flex;
  align-items: center;
  padding-left: 3px;
}
.window-controls button { width: 26px; }
.window-controls .help {
  width: 40px;
  gap: 10px;
  font-size: 18px;
  font-weight: 700;
}

.ribbon {
  display: flex;
  height: 86px;
  border-bottom: 1px solid #777;
}
.group {
  display: grid;
  flex: none;
  box-sizing: border-box;
  background: linear-gradient(#707070, #707070) right 4px / 1px 78px no-repeat;
}
.group.boss { grid-template-columns: 61px 61px 146px; padding-left: 7px; }
.group.cut { grid-template-columns: 54px 48px 54px 112px; padding-left: 2px; }
.group.modify { grid-template-columns: 38px 44px 64px 82px 45px; }
.group.geometry { grid-template-columns: 62px 46px; }
.group.bodies { grid-template-columns: 97px 134px 132px; }
.group.mesh { grid-template-columns: 54px 44px 68px 60px; background: none; }
.column { display: flex; flex-direction: column; }
.column button:disabled { color: #7b7b7b; }
.big button,
.drop button {
  flex: 1;
  flex-direction: column;
  justify-content: flex-start;
  white-space: pre;
}
.big button { padding-top: 18px; }
.drop button { padding: 11px 0; }
.drop .caret { margin-top: auto; }
.list { padding-top: 6px; }
.list button {
  gap: 5px;
  height: 26px;
  padding-left: 4px;
  justify-content: flex-start;
}

.workspace {
  display: grid;
  flex: 1;
  grid-template: 22px 1fr / 234px 1fr;
}
.tabs {
  z-index: 1;
  display: flex;
  grid-area: 1 / 1 / 2 / 3;
  justify-self: start;
}
.tabs button {
  padding: 0 9px 0 8px;
  border-right: 1px solid #777;
  background: #2d2d2d;
}
.tabs button.active {
  background: #474747;
  font-weight: 700;
}
.tabs button:last-child { border-right: 0; }

.manager {
  display: flex;
  flex-direction: column;
  grid-area: 2 / 1;
  min-width: 0;
  border-right: 1px solid #2f2f2f;
  border-top: 1px solid #777;
}
.grip {
  display: flex;
  align-items: center;
  justify-content: center;
  height: 14px;
  margin: 0 2px 5px 0;
  border: solid #6e6e6e;
  border-width: 1px 0;
}
.grip i,
.handle i {
  width: 5px;
  height: 5px;
  border-radius: 50%;
  background: #c8c8c8;
}
.manager-tabs {
  display: flex;
  height: 25px;
}
.manager-tabs button {
  width: 40px;
  border-right: 1px solid #666;
  background: #2d2d2d;
}
.manager-tabs .active { background: #474747; }
.manager-tabs .more {
  flex: 1;
  padding-left: 12px;
  border: 0;
  background: none;
}
.more svg { width: 10px; height: 14px; }
.filter {
  display: flex;
  align-items: center;
  height: 24px;
  margin: 0 3px;
  padding-left: 1px;
  border: 1px solid #7d7d7d;
  background: #525252;
}
.root {
  display: flex;
  align-items: center;
  gap: 4px;
  height: 22px;
  margin-right: 2px;
  padding-left: 1px;
  border-bottom: 4px solid #d3a545;
  overflow: hidden;
  white-space: nowrap;
}
.features {
  margin: -2px 2px 0 0;
  padding: 0;
  border-bottom: 4px solid #3f83ad;
  list-style: none;
}
.features li {
  display: flex;
  align-items: center;
  height: 22px;
}
.features li i { width: 25px; }
.features li .expand::before {
  content: "";
  display: block;
  width: 0;
  margin-left: 8px;
  border: 4px solid transparent;
  border-left-color: #f0f0f0;
  border-right: 0;
}
.features li span { margin-left: 5px; }
.scroll {
  display: flex;
  height: 17px;
  margin: auto 2px 0 0;
  background: #f1f1f1;
}
.scroll button { width: 16px; }
.scroll svg { width: 8px; height: 10px; }
.track { flex: 1; }
.track i {
  display: block;
  width: 67%;
  height: 100%;
  background: #cdcdcd;
}

.viewport {
  position: relative;
  display: flex;
  flex-direction: column;
  grid-area: 1 / 2 / 3 / 3;
  overflow: hidden;
}
.backdrop,
.model {
  position: absolute;
  inset: 0;
  width: 100%;
  height: 100%;
}
.view-bar {
  position: relative;
  display: flex;
  justify-content: center;
  height: 30px;
  padding-right: 4px;
}
.view-tools,
.doc-controls {
  display: flex;
  align-items: center;
}
.view-tools button { width: 26px; height: 30px; }
.view-tools .arrow { width: 14px; }
.doc-controls {
  position: absolute;
  right: 5px;
  height: 30px;
}
.doc-controls button { width: 26px; }
.handle {
  position: absolute;
  top: 48%;
  left: 0;
  width: 8px;
  height: 38px;
  background: #444;
}
.task-pane {
  position: relative;
  align-self: flex-end;
  width: 25px;
  margin-top: 21px;
  background: #2b2b2b;
}
.task-pane button {
  box-sizing: border-box;
  width: 25px;
  height: 24px;
  border-bottom: 1px solid #666;
}
.task-pane .active { background: #a3a3a3; }
.orientation {
  position: relative;
  margin-top: auto;
  padding: 0 0 1px 11px;
  color: #111;
}
.orientation svg {
  display: block;
  width: 60px;
  height: 56px;
}
.orientation text { font: 11px "Liberation Sans", sans-serif; }
.orientation p {
  margin: 17px 0 0;
  font: 500 16px/18px Lato, sans-serif;
}

.doc-tabs {
  display: flex;
  height: 16px;
  background: #474747;
}
.step {
  width: 16px;
  margin-right: 1px;
  background: #a2a2a2;
}
.step svg { width: 12px; height: 12px; }
.doc {
  padding: 0 10px;
  border-right: 1px solid #777;
  background: #333;
}
.doc.active {
  background: #2a2a2a;
  font-weight: 700;
}
.doc:last-child { padding-right: 18px; }
.status {
  display: flex;
  align-items: center;
  box-sizing: border-box;
  height: 20px;
  border-bottom: 1px solid #6b4a50;
  background: #949494;
  color: #f2f2f2;
}
.version {
  flex: 1;
  padding-left: 1px;
}
.rule {
  width: 7px;
  height: 15px;
  border-left: 1px solid #dcdcdc;
}
.cell {
  margin-right: 15px;
  padding: 1px 7px 1px 3px;
  border: solid #dcdcdc;
  border-width: 0 1px;
}
.units {
  display: flex;
  align-items: center;
  gap: 20px;
  box-sizing: border-box;
  width: 157px;
  margin: 0;
  padding-left: 31px;
  border-right: 0;
}
.status > .ico { margin-right: 2px; }

.watermark {
  position: absolute;
  top: 4px;
  left: 4px;
  z-index: 2;
  display: flex;
  margin: 0;
  color: #d0d0d0;
  font: 75px/84px "Liberation Serif", serif;
  text-shadow: 1px 2px 0 #55503f;
  pointer-events: none;
  white-space: nowrap;
}
.watermark span {
  font: 80px/66px "Noto Sans CJK SC", sans-serif;
}
</style>
